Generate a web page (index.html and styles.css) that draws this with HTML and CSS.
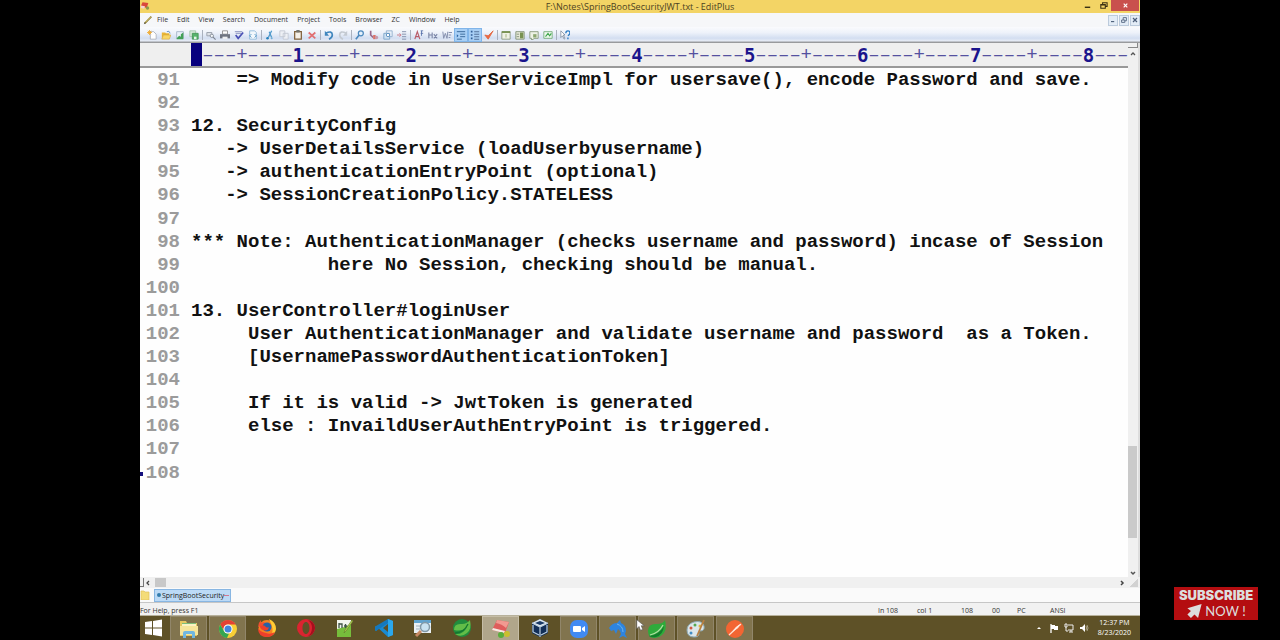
FILE: index.html
```html
<!DOCTYPE html>
<html lang="en">
<head>
<meta charset="utf-8">
<title>F:\Notes\SpringBootSecurityJWT.txt - EditPlus</title>
<link rel="stylesheet" href="styles.css">
</head>
<body>
<div class="stage">
<main class="desktop">
  <header class="titlebar">
    <svg class="app-icon" viewBox="0 0 12 12"><path d="M3 2l7 1-2 6-7-2z" fill="#d9483b"/><path d="M1 6l5 1-1 3-4-1z" fill="#f4d5cf"/><circle cx="9" cy="9" r="2" fill="#8a9a4a"/></svg>
    <h1>F:\Notes\SpringBootSecurityJWT.txt - EditPlus</h1>
    <div class="window-buttons">
      <button aria-label="Minimize"><svg viewBox="0 0 10 10"><path d="M2 7h6" stroke="#3a3013" stroke-width="1.6"/></svg></button>
      <button aria-label="Restore"><svg viewBox="0 0 10 10"><path d="M2 4h5v4H2zM4 4V2h5v4H7M2 4.5h5" fill="none" stroke="#3a3013" stroke-width="1.2"/></svg></button>
      <button class="close" aria-label="Close"><svg viewBox="0 0 10 10"><path d="M3 3l4 4M7 3l-4 4" stroke="#fff" stroke-width="1.3"/></svg></button>
    </div>
  </header>

  <nav class="menubar">
    <svg class="pencil" viewBox="0 0 12 12"><path d="M2 10L10 2" stroke="#8a7a35" stroke-width="2"/><path d="M3 8.500L9 2.500" stroke="#e7d87c" stroke-width="1"/><path d="M1 11l1-2 1 1z" fill="#333"/></svg>
    <button>File</button><button>Edit</button><button>View</button><button>Search</button><button>Document</button><button>Project</button><button>Tools</button><button>Browser</button><button>ZC</button><button>Window</button><button>Help</button>
    <div class="child-buttons">
      <button aria-label="Minimize document"><svg viewBox="0 0 10 10"><path d="M2.500 7h4" stroke="#4b5d78" stroke-width="1.400"/></svg></button>
      <button aria-label="Restore document"><svg viewBox="0 0 10 10"><path d="M2 5h4v3H2zM4 5V2h4v4H6" fill="none" stroke="#5f7089" stroke-width="1.200"/></svg></button>
      <button aria-label="Close document"><svg viewBox="0 0 10 10"><path d="M2.500 2.500l5 5M7.500 2.500l-5 5" stroke="#4b5d78" stroke-width="1.500"/></svg></button>
    </div>
  </nav>

  <div class="toolbar" role="toolbar" aria-label="Standard">
    <button aria-label="New"><svg viewBox="0 0 12 12"><path d="M4 2h4l3 3v6H4z" fill="#fff" stroke="#a8adb8"/><path d="M3 0v6M0 3h6M1 1l4 4M5 1L1 5" stroke="#f0a92d"/></svg></button>
    <button aria-label="Open"><svg viewBox="0 0 12 12"><path d="M1 3h4l1 1h4v2H3l-2 5z" fill="#e9b536"/><path d="M3 6h9l-2 5H1z" fill="#f9d766" stroke="#c99528" stroke-width=".5"/><path d="M7 2q3-2 4 2" fill="none" stroke="#5488c0"/></svg></button>
    <button aria-label="Save"><svg viewBox="0 0 12 12"><path d="M2 2h8v8H2z" fill="#e9f0f8" stroke="#9fb0c4"/><path d="M2 10l3-3 2 1V5l3-2v8H2z" fill="#43a057"/></svg></button>
    <button aria-label="Save all"><svg viewBox="0 0 12 12"><path d="M1 1h7v7H1z" fill="#d7e9db" stroke="#9fc2a8"/><path d="M4 4h7v7H4z" fill="#57b36c" stroke="#419453"/><path d="M6 8h3v3H6z" fill="#e3f4e6"/></svg></button>
    <i class="sep"></i>
    <button aria-label="Print preview"><svg viewBox="0 0 12 12"><path d="M1 3h6v4H1z" fill="#dde1e7" stroke="#9299a5"/><circle cx="7" cy="7" r="2" fill="#f4f7fa" stroke="#7d8592"/><path d="M8.500 8.500l3 3" stroke="#7d8592" stroke-width="1.400"/></svg></button>
    <button aria-label="Print"><svg viewBox="0 0 12 12"><path d="M3 1h6v4H3z" fill="#fff" stroke="#888"/><path d="M0 5h12v5H0z" fill="#6e7480"/><path d="M3 8h6v3H3z" fill="#eceef0"/></svg></button>
    <button aria-label="Spell check"><svg viewBox="0 0 12 12"><path d="M1 2h9M2 4h7" stroke="#7c86b6"/><path d="M2 6l3 4 6-7" fill="none" stroke="#4950b5" stroke-width="2"/></svg></button>
    <button aria-label="Browser preview"><svg viewBox="0 0 12 12"><path d="M2 1h6l2 2v8H2z" fill="#f2f8fc" stroke="#8ab6d7"/><path d="M4 5L2 7l2 2M8 5l2 2-2 2" fill="none" stroke="#3d87bd"/></svg></button>
    <i class="sep"></i>
    <button aria-label="Cut"><svg viewBox="0 0 12 12"><path d="M8 1L4 9M5 2l3 7" stroke="#4c98cb" stroke-width="1.500"/><circle cx="3" cy="10" r="1.500" fill="#247fbb"/><circle cx="8" cy="10" r="1.200" fill="#70afd7"/></svg></button>
    <button aria-label="Copy"><svg viewBox="0 0 12 12"><path d="M1 1h6v7H1zM5 4h6v7H5z" fill="#edf0f5" stroke="#c0c7d1"/></svg></button>
    <button aria-label="Paste"><svg viewBox="0 0 12 12"><path d="M2 2h8v9H2z" fill="#f6f0e7" stroke="#80613c" stroke-width="1.500"/><path d="M4 0h4v3H4z" fill="#73746f"/></svg></button>
    <button aria-label="Delete"><svg viewBox="0 0 12 12"><path d="M2 3l8 7M10 3l-8 7" stroke="#e16f72" stroke-width="2"/></svg></button>
    <i class="sep"></i>
    <button aria-label="Undo"><svg viewBox="0 0 12 12"><path d="M2 4q8-4 8 2 0 3-4 5" fill="none" stroke="#3f86be" stroke-width="2"/><path d="M1 1v6h5z" fill="#3f86be"/></svg></button>
    <button aria-label="Redo"><svg viewBox="0 0 12 12"><path d="M10 4Q2 0 2 6q0 3 4 5" fill="none" stroke="#c4cad2" stroke-width="2"/><path d="M11 1v6H6z" fill="#c4cad2"/></svg></button>
    <i class="sep"></i>
    <button aria-label="Find"><svg viewBox="0 0 12 12"><circle cx="7" cy="4" r="3" fill="#e4f0fb" stroke="#4d89be" stroke-width="1.500"/><path d="M5 6l-4 5" stroke="#4d89be" stroke-width="2"/></svg></button>
    <button aria-label="Replace"><svg viewBox="0 0 12 12"><path d="M2 1v5l3 3" fill="none" stroke="#9a6889" stroke-width="2"/><path d="M5 6h3v5H5z" fill="#dc7165"/><circle cx="9" cy="9" r="2" fill="#c69aac"/></svg></button>
    <button aria-label="Find in files"><svg viewBox="0 0 12 12"><path d="M4 1h7v7H4z" fill="#eaf1fa" stroke="#8baaca"/><path d="M1 4h7v7H1z" fill="#cee1f2" stroke="#75a1c8"/><circle cx="6" cy="6" r="2" fill="#fff" stroke="#5289bc"/></svg></button>
    <button aria-label="Go to line"><svg viewBox="0 0 12 12"><path d="M6 2h5M6 5h5M6 8h5M6 11h5" stroke="#7785a4"/><path d="M0 6h4M3 4l2 2-2 2" fill="none" stroke="#cc6a74"/></svg></button>
    <i class="sep"></i>
    <button aria-label="Font"><svg viewBox="0 0 12 12"><path d="M1 11L4 2l3 9M2 8h4" fill="none" stroke="#b95b68" stroke-width="1.400"/><path d="M8 1h3M8 4h3M9 1v6" stroke="#536fa8"/></svg></button>
    <button aria-label="Hex viewer"><svg viewBox="0 0 12 12"><path d="M1 3v7M5 3v7M1 6h4M7 5l4 5M11 5l-4 5" fill="none" stroke="#7984a5" stroke-width="1.300"/></svg></button>
    <button aria-label="Word wrap"><svg viewBox="0 0 12 12"><path d="M1 2l1 8 2-6 2 6 1-8M8 3h4M8 6h3M8 9h2" fill="none" stroke="#8792b0" stroke-width="1.200"/></svg></button>
    <button class="active" aria-label="Auto indent"><svg viewBox="0 0 12 12"><path d="M1 2h10M5 5h6M5 8h6M1 11h6" stroke="#416f9f" stroke-width="1.200"/><path d="M1 5l2 2-2 2z" fill="#2a62a0"/></svg></button>
    <button class="active" aria-label="Line numbers"><svg viewBox="0 0 12 12"><path d="M1 2h2M1 6h2M1 10h2" stroke="#315e97" stroke-width="2"/><path d="M5 2h6M5 5h6M5 8h6M5 11h6" stroke="#56749c" stroke-width="1.300"/></svg></button>
    <button aria-label="Preferences"><svg viewBox="0 0 12 12"><path d="M1 6l4 5 6-10-6 6z" fill="#ed6b43" stroke="#e2643e"/></svg></button>
    <i class="sep"></i>
    <button aria-label="Directory window"><svg viewBox="0 0 12 12"><path d="M1 2h10v9H1z" fill="#f0f2e5" stroke="#879578"/><path d="M1 2.500h10" stroke="#718d48" stroke-width="2"/><path d="M6 5v4" stroke="#95ab6d"/></svg></button>
    <button aria-label="Output window"><svg viewBox="0 0 12 12"><path d="M1 2h10v9H1z" fill="#e7ead8" stroke="#798a70"/><path d="M6 3h4v7H6z" fill="#789252"/><path d="M2 5h3M2 8h3" stroke="#778671"/></svg></button>
    <button aria-label="Cliptext"><svg viewBox="0 0 12 12"><path d="M1 2h10v8H7l-4 2v-2H1z" fill="#edf2e5" stroke="#829475"/><path d="M5 5h4v4H5z" fill="#8ca770"/></svg></button>
    <button aria-label="Browser window"><svg viewBox="0 0 12 12"><path d="M1 2h10v8H1z" fill="#edf8ed" stroke="#6fa975"/><path d="M3 8l3-4 2 3 2-3" fill="none" stroke="#3ca54a" stroke-width="1.300"/></svg></button>
    <i class="sep"></i>
    <button aria-label="Context help"><svg viewBox="0 0 12 12"><path d="M1 1v8l2-2 2 4 1-1-2-4h2z" fill="#fff" stroke="#66758a" stroke-width=".8"/><path d="M7 4q0-3 2.500-3T12 3.500Q12 5 9.500 7M9.500 9v2" fill="none" stroke="#2b7cc4" stroke-width="1.600"/></svg></button>
  </div>

  <section class="workspace">
    <div class="document">
      <div class="ruler" aria-label="Column ruler">
        <div class="seg"><i class="caret"></i><span class="d3">–––</span><b>+</b><span>––––</span><em>1</em></div>
        <div class="seg"><span>––––</span><b>+</b><span>––––</span><em>2</em></div>
        <div class="seg"><span>––––</span><b>+</b><span>––––</span><em>3</em></div>
        <div class="seg"><span>––––</span><b>+</b><span>––––</span><em>4</em></div>
        <div class="seg"><span>––––</span><b>+</b><span>––––</span><em>5</em></div>
        <div class="seg"><span>––––</span><b>+</b><span>––––</span><em>6</em></div>
        <div class="seg"><span>––––</span><b>+</b><span>––––</span><em>7</em></div>
        <div class="seg"><span>––––</span><b>+</b><span>––––</span><em>8</em></div>
        <div class="tail"><span>–––</span></div>
      </div>
      <div class="lines">
        <div class="line"><span>91</span><code>    =&gt; Modify code in UserServiceImpl for usersave(), encode Password and save.</code></div>
        <div class="line"><span>92</span><code></code></div>
        <div class="line"><span>93</span><code>12. SecurityConfig</code></div>
        <div class="line"><span>94</span><code>   -&gt; UserDetailsService (loadUserbyusername)</code></div>
        <div class="line"><span>95</span><code>   -&gt; authenticationEntryPoint (optional)</code></div>
        <div class="line"><span>96</span><code>   -&gt; SessionCreationPolicy.STATELESS</code></div>
        <div class="line"><span>97</span><code></code></div>
        <div class="line"><span>98</span><code>*** Note: AuthenticationManager (checks username and password) incase of Session</code></div>
        <div class="line"><span>99</span><code>            here No Session, checking should be manual.</code></div>
        <div class="line"><span>100</span><code></code></div>
        <div class="line"><span>101</span><code>13. UserController#loginUser</code></div>
        <div class="line"><span>102</span><code>     User AuthenticationManager and validate username and password  as a Token.</code></div>
        <div class="line"><span>103</span><code>     [UsernamePasswordAuthenticationToken]</code></div>
        <div class="line"><span>104</span><code></code></div>
        <div class="line"><span>105</span><code>     If it is valid -&gt; JwtToken is generated</code></div>
        <div class="line"><span>106</span><code>     else : InvaildUserAuthEntryPoint is triggered.</code></div>
        <div class="line"><span>107</span><code></code></div>
        <div class="line current"><span>108</span><code></code></div>
      </div>
    </div>
    <div class="vscroll">
      <i class="split"></i>
      <svg viewBox="0 0 8 8"><path d="M2 5l2-2 2 2" fill="none" stroke="#555" stroke-width="1.300"/></svg>
      <div class="vtrack"><i></i></div>
      <svg viewBox="0 0 8 8"><path d="M2 3l2 2 2-2" fill="none" stroke="#555" stroke-width="1.500"/></svg>
    </div>
  </section>

  <div class="hscroll">
    <i class="hsplit"></i>
    <svg viewBox="0 0 8 8"><path d="M5 2L3 4l2 2" fill="none" stroke="#444" stroke-width="1.300"/></svg>
    <i class="hthumb"></i>
    <svg class="right" viewBox="0 0 8 8"><path d="M3 2l2 2-2 2" fill="none" stroke="#444" stroke-width="1.500"/></svg>
    <i class="grip"></i>
  </div>

  <div class="tabs">
    <svg viewBox="0 0 10 10"><path d="M1 1h3l1 1h4v8H1z" fill="#f4dc78" stroke="#dfc25c" stroke-width=".7"/></svg>
    <button><i class="dot"></i><span>SpringBootSecurity</span><i class="more"></i></button>
  </div>

  <footer class="status">
    <span class="help">For Help, press F1</span>
    <span class="ln">In 108</span><span class="col">col 1</span><span class="total">108</span><span class="hex">00</span><span class="pc">PC</span><span class="enc">ANSI</span>
  </footer>

  <div class="taskbar">
    <button class="start" aria-label="Start"><svg viewBox="0 0 20 20"><path d="M1 4l7-1v6.500H1zM9 3l9-1.500v8H9zM1 10.500h7V17l-7-1zM9 10.500h9v8L9 17z" fill="#fff"/></svg></button>
    <button class="open" aria-label="File Explorer"><svg viewBox="0 0 20 20"><path d="M1 2h6l1 2h10v13H1z" fill="#e7c860"/><path d="M3 4h14v3H3z" fill="#7dbf7b"/><path d="M3 5h14v3H3z" fill="#fbf3c4"/><path d="M1 7h18v9H1z" fill="#f7e59a"/><path d="M4 19v-5q0-2 2-2h8q2 0 2 2v5h-3v-4H7v4z" fill="#70b7e2"/></svg></button>
    <button class="open" aria-label="Chrome"><svg viewBox="0 0 20 20"><circle cx="10" cy="10" r="9" fill="#f8cf36"/><path d="M2.200 5.500A9 9 0 0 1 17.800 5.500H10a4.500 4.500 0 0 0-4 6.500z" fill="#e44134"/><path d="M2.200 5.500L6.100 12.200a4.500 4.500 0 0 0 5 2.100L9 19A9 9 0 0 1 2.200 5.500z" fill="#35a652"/><circle cx="10" cy="10" r="4.500" fill="#fff"/><circle cx="10" cy="10" r="3.500" fill="#4285dd"/></svg></button>
    <button aria-label="Firefox"><svg viewBox="0 0 20 20"><circle cx="10" cy="10.500" r="8.500" fill="#f58220"/><path d="M12 1q7 3 7 10a9 9 0 0 1-5 7q4-6-2-17z" fill="#ffcc34"/><path d="M1 9q0-4 3-7v3l3-1 2 2z" fill="#f24e31"/><circle cx="10" cy="9" r="4.500" fill="#2861a6"/><path d="M3 8q4-2 6 1 2 1 3 0-1 5-6 3-3-1-3-4zM1 10q0 9 9 9 6 0 8-5-5 3-9 1-6-1-8-5z" fill="#ee3f2b"/></svg></button>
    <button aria-label="Opera"><svg viewBox="0 0 20 20"><path fill-rule="evenodd" d="M10 1a9 9 0 1 0 0 18 9 9 0 0 0 0-18zm0 3c2 0 3.500 2.500 3.500 6S12 16 10 16s-3.500-2.500-3.500-6S8 4 10 4z" fill="#da2430"/><path d="M12 2q6 1 7 8-1 7-7 8 4-3 4-8t-4-8z" fill="#a80e1e"/></svg></button>
    <button aria-label="Notepad++"><svg viewBox="0 0 20 20"><path d="M2 2h14v17H2z" fill="#f3f5ed"/><path d="M2 11q7-1 14-5v13H2z" fill="#76bd3b"/><path d="M4 5v5M4 6h3v4M9 8h3M10.500 6v4" stroke="#405445" fill="none" stroke-width="1.300"/><path d="M18 3l-7 10-2 2 1-3 7-10z" fill="#bdd653" stroke="#5b7b2b" stroke-width=".6"/></svg></button>
    <button aria-label="Visual Studio Code"><svg viewBox="0 0 20 20"><path d="M14 1l5 2v14l-5 2L2 8l-1 1v3l1 1L14 1z" fill="#198bd2"/><path d="M14 1l5 2v14l-5 2z" fill="#2ba7ec"/><path d="M14 6v8l-5-4z" fill="#5d5028"/><path d="M2 8L1 9v3l1 1 12-8V1z" fill="#1578bd"/></svg></button>
    <button aria-label="Search tool"><svg viewBox="0 0 20 20"><path d="M1 2h17v13H1z" fill="#e9f0f4"/><path d="M1 2h17v3H1z" fill="#61a4ce"/><path d="M3 8h5M3 11h4" stroke="#9fb1bc"/><circle cx="12" cy="9" r="4.500" fill="#c9e3f1" stroke="#8199a7" stroke-width="1.500"/><path d="M8 13l-5 5" stroke="#c78862" stroke-width="3"/></svg></button>
    <button aria-label="Spring Tool Suite"><svg viewBox="0 0 20 20"><circle cx="10" cy="10" r="9" fill="#218c3d"/><path d="M2 12Q2 5 10 6q5 0 8-4 2 9-3 13-6 5-12 1 8 1 12-7-5 5-13 3z" fill="#62bd48"/><path d="M3 15q9 0 13-9" fill="none" stroke="#13782f" stroke-width="1.300"/></svg></button>
    <button class="open selected" aria-label="EditPlus"><svg viewBox="0 0 20 20"><path d="M6 1l12 2-4 11L1 11z" fill="#df5d5c"/><path d="M6 1l12 2-3 6q-4-4-10-5z" fill="#f19a91"/><path d="M1 11l12 3 1-2-12-3z" fill="#f4e9e2"/><circle cx="10" cy="16" r="3" fill="#58ae3b"/><circle cx="16" cy="15" r="3" fill="#c9bf2e"/></svg></button>
    <button aria-label="VirtualBox"><svg viewBox="0 0 20 20"><path d="M10 1l8 4v10l-8 4-8-4V5z" fill="#122f58"/><path d="M2 5l8 4 8-4-8-4z" fill="#dce7ef"/><path d="M5 5l5-2 5 2-5 2z" fill="#173865"/><path d="M2 5l8 4v10M18 5l-8 4M3 7v7l6 3M17 7v7l-6 3" fill="none" stroke="#bfd1df" stroke-width="1.200"/></svg></button>
    <button class="open" aria-label="Zoom"><svg viewBox="0 0 20 20"><rect x="1" y="1" width="18" height="18" rx="7" fill="#418af3"/><rect x="4" y="7" width="8" height="6" rx="1" fill="#fff"/><path d="M13 9l3-2v6l-3-2z" fill="#fff"/></svg></button>
    <button class="open" aria-label="MySQL Workbench"><svg viewBox="0 0 20 20"><path d="M1 9q3-5 8-5l3-3 1 3q5 2 5 8l-1 3 2 4-4-2-4 2 2-4q0-3-3-5l-2 5-2-4-3 1z" fill="#2d84df"/><path d="M9 5q6 2 6 8" fill="none" stroke="#6bb6ef"/></svg></button>
    <button class="open" aria-label="Spring"><svg class="pointer" viewBox="0 0 12 16"><path d="M1 1v12l3-3 2 5 3-1-2-5h4z" fill="#fff" stroke="#555" stroke-width=".8"/></svg><svg viewBox="0 0 20 20"><path d="M1 11Q2 4 10 5q6 0 8-4 2 9-1 13-6 7-14 4Q1 16 1 11z" fill="#2eab3b"/><path d="M2 17q10-1 15-10-1 9-8 11-4 1-7-1z" fill="#137d2c"/><path d="M3 16q9-2 13-10" fill="none" stroke="#b0e0a2" stroke-width="1.200"/></svg></button>
    <button class="open" aria-label="Paint"><svg viewBox="0 0 20 20"><path d="M1 11q0-6 7-8 8-2 10 4 1 5-4 5-2 1-1 3 0 3-5 3-7 0-7-7z" fill="#dce6e9" stroke="#8eabb6"/><circle cx="5" cy="9" r="1.500" fill="#d2573f"/><circle cx="9" cy="6" r="1.500" fill="#55a851"/><circle cx="5" cy="14" r="1.500" fill="#428cc4"/><circle cx="14" cy="7" r="1.500" fill="#e2b442"/><path d="M18 1l-7 16" stroke="#b97f40" stroke-width="1.800"/></svg></button>
    <button class="open" aria-label="Postman"><svg viewBox="0 0 20 20"><circle cx="10" cy="10" r="9" fill="#f36532"/><path d="M5 15l6-7 4-3-2 4-6 4z" fill="#fff"/><path d="M4 16l12-11" stroke="#ffe2d4" stroke-width="1.200"/></svg></button>
    <div class="tray">
      <svg viewBox="0 0 10 10"><path d="M3 6l2-2 2 2z" fill="#fff"/></svg>
      <svg viewBox="0 0 10 10"><path d="M2 1v9" stroke="#fff" stroke-width="1.300"/><path d="M2 2h4v1h3v4H5V6H2z" fill="#fff"/></svg>
      <svg viewBox="0 0 10 10"><path d="M4 2h5v5H4M5 9h4M7 7v2M1 1h2v3H1zM2 4v4h2" fill="none" stroke="#eee"/></svg>
      <svg viewBox="0 0 10 10"><path d="M1 4h2l3-3v8L3 6H1z" fill="#fff"/><path d="M7 3q1 2 0 4M8 2q2 3 0 6" fill="none" stroke="#bdb69d" stroke-width=".8"/></svg>
      <time datetime="2020-08-23T12:37">12:37 PM<br>8/23/2020</time>
    </div>
  </div>
</main>
<aside class="side">
  <button class="subscribe"><strong>SUBSCRIBE</strong><span class="now"><svg viewBox="0 0 18 18"><path d="M17 1L1 6l4 3-4 4 4 4 4-4 4 4z" fill="#ddd"/></svg>NOW !</span></button>
</aside>
</div>
</body>
</html>
```
FILE: styles.css
```css
* { box-sizing: border-box; }
body { margin: 0; background: #000; font-family: "Open Sans", "Noto Sans", sans-serif; font-size: 7px; color: #333; }
button { margin: 0; padding: 0; border: 0; background: none; font: inherit; color: inherit; display: flex; align-items: center; justify-content: center; }
svg { display: block; flex: none; }
i, em { font-style: normal; }

.stage { display: grid; grid-template-columns: 14fr 100fr 14fr; min-height: 100vh; }
.desktop { grid-column: 2; display: flex; flex-direction: column; min-width: 0; background: #fefefe; }

.titlebar { display: grid; grid-template-columns: 1fr auto 1fr; height: 13px; background: #f3d465; }
.titlebar h1 { margin: 0; font-size: 9px; line-height: 13px; font-weight: 400; color: #4c4222; white-space: nowrap; }
.app-icon { width: 10px; height: 11px; }
.window-buttons { display: flex; justify-content: flex-end; align-items: flex-start; padding-right: 1px; }
.window-buttons button { width: 16px; height: 11px; }
.window-buttons svg { width: 9px; height: 9px; }
.window-buttons .close { width: 28px; background: #c9504d; }

.menubar { display: flex; align-items: center; gap: 9px; height: 14px; padding-left: 3px; background: #f6f7f9; line-height: 10px; }
.pencil { width: 10px; height: 10px; margin-right: -5px; }
.child-buttons { display: flex; gap: 1px; margin-left: auto; }
.child-buttons button { width: 10px; height: 11px; background: #e3ecf6; border: 1px solid #bccbdc; }
.child-buttons svg { width: 8px; height: 8px; }

.toolbar { display: flex; align-items: center; height: 16px; padding-left: 5px; background: linear-gradient(#fafbfd 0%, #eef2fa 35%, #d3def1 70%, #e4eaf5 85%, #858585 100%); }
.toolbar button { width: 14px; height: 14px; }
.toolbar svg { width: 10px; height: 10px; }
.toolbar .active { background: #a8cff5; border: 1px solid #81b5e9; }
.sep { width: 1px; height: 10px; margin: 0 1px; background: #aab1be; }

.workspace { flex: 1; display: flex; min-height: 0; }
.document { flex: 1; min-width: 0; display: flex; flex-direction: column; overflow: hidden; }
.ruler { display: grid; grid-template-columns: repeat(8, minmax(0, 10fr)) minmax(0, 3fr); height: 25px; padding-left: 51px; overflow: hidden; background: #efefef; border-bottom: 2px solid #999; font-family: "Liberation Mono", monospace; font-size: 19px; line-height: 25px; color: #5551a0; }
.seg, .tail { display: flex; }
.seg > * { flex: 1 1 0; min-width: 0; display: flex; justify-content: center; font-weight: 400; }
.seg > span { flex-grow: 4; }
.seg > .d3 { flex-grow: 3; }
.seg em { font-family: "DejaVu Sans Mono", monospace; font-weight: 700; color: #1b148c; }
.seg .caret { background: #07007e; }

.lines { flex: 1; display: grid; grid-template-rows: repeat(22, minmax(23px, 1fr)); padding-top: 1px; font-family: "Liberation Mono", monospace; font-size: 19px; font-weight: 700; line-height: 23px; color: #111; }
.line { display: grid; grid-template-columns: 40px 1fr; column-gap: 11px; }
.line span { text-align: right; color: #9b9b9b; }
.line code { font: inherit; white-space: pre; }
.current { background: linear-gradient(#15107e, #15107e) 0 10px / 3px 4px no-repeat; }

.vscroll { display: flex; flex-direction: column; align-items: center; width: 12px; background: #f0f0f0; border-right: 2px solid #ddd; }
.vscroll svg { width: 8px; height: 8px; }
.split { align-self: stretch; height: 5px; margin-bottom: 2px; border-bottom: 1px solid #888; border-right: 1px solid #888; }
.vtrack { flex: 1; align-self: stretch; display: grid; grid-template-rows: 385fr 91fr 31fr; }
.vtrack i { grid-row: 2; margin-right: 1px; background: #cacaca; }

.hscroll { display: flex; align-items: center; height: 11px; background: #f0f0f0; padding-right: 2px; }
.hscroll svg { width: 8px; height: 8px; }
.hsplit { width: 4px; height: 9px; border-right: 1px solid #777; border-bottom: 1px solid #777; }
.hthumb { width: 11px; height: 9px; margin-left: 3px; background: #c8c8c8; }
.hscroll .right { margin-left: auto; margin-right: 4px; }
.grip { width: 8px; height: 8px; background: linear-gradient(135deg, #f0f0f0 50%, #d2d2d2 50%); }

.tabs { display: flex; align-items: center; gap: 4px; height: 15px; background: #fafafa; border-bottom: 1px solid #c6c6c6; }
.tabs svg { width: 10px; height: 10px; }
.tabs button { height: 13px; padding: 0 1px; background: #bcdaf6; border: 1px solid #88b6e2; color: #222; }
.dot { width: 4px; height: 4px; margin: 0 1px; border-radius: 2px; background: #337cad; }
.more { width: 5px; height: 1px; background: #ce7891; }

.status { display: flex; height: 13px; line-height: 15px; background: #f1f1f1; border-bottom: 1px solid #b7b19b; white-space: nowrap; }
.help { flex: 1; }
.ln { width: 39px; }
.col { width: 44px; }
.total { width: 31px; }
.hex { width: 25px; }
.pc { width: 33px; }
.enc { width: 90px; }

.taskbar { display: flex; height: 24px; gap: 2px; background: #5e5127; }
.taskbar > button { width: 37px; position: relative; }
.taskbar > .start { width: 28px; }
.taskbar > button > svg { width: 20px; height: 20px; }
.taskbar > .open { background: #81744e; border: 1px solid #91866a; border-bottom: 0; }
.taskbar > .selected { background: #b0a68b; border-color: #c5bda6; }
.taskbar > button > .pointer { position: absolute; left: -3px; top: 2px; width: 9px; height: 12px; z-index: 1; }
.tray { display: flex; align-items: center; gap: 5px; margin-left: auto; padding-right: 9px; color: #fff; }
.tray svg { width: 10px; height: 10px; }
.tray time { margin-left: 4px; line-height: 10px; text-align: center; white-space: nowrap; }

.side { display: flex; flex-direction: column; justify-content: flex-end; align-items: flex-end; padding: 0 22px 20px 0; }
.subscribe { flex-direction: column; width: 84px; height: 33px; background: #b40d10; color: #ddd; font-family: "Liberation Sans", sans-serif; }
.subscribe strong { font-family: Inter, sans-serif; font-weight: 900; font-size: 13px; line-height: 15px; }
.now { display: flex; align-items: center; gap: 2px; font-family: Lato, sans-serif; font-size: 13px; line-height: 15px; }
.now svg { width: 17px; height: 16px; }
```
